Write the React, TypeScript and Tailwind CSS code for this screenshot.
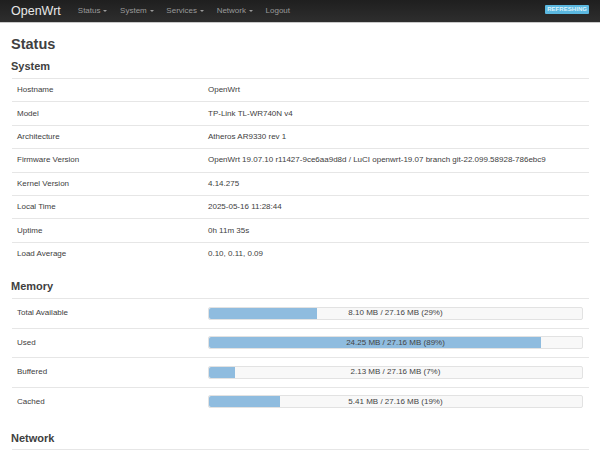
const navItems = ["Status", "System", "Services", "Network"];

const systemRows = [
  ["Hostname", "OpenWrt"],
  ["Model", "TP-Link TL-WR740N v4"],
  ["Architecture", "Atheros AR9330 rev 1"],
  ["Firmware Version", "OpenWrt 19.07.10 r11427-9ce6aa9d8d / LuCI openwrt-19.07 branch git-22.099.58928-786ebc9"],
  ["Kernel Version", "4.14.275"],
  ["Local Time", "2025-05-16 11:28:44"],
  ["Uptime", "0h 11m 35s"],
  ["Load Average", "0.10, 0.11, 0.09"],
];

const memoryRows = [
  { label: "Total Available", text: "8.10 MB / 27.16 MB (29%)", pct: 29 },
  { label: "Used", text: "24.25 MB / 27.16 MB (89%)", pct: 89 },
  { label: "Buffered", text: "2.13 MB / 27.16 MB (7%)", pct: 7 },
  { label: "Cached", text: "5.41 MB / 27.16 MB (19%)", pct: 19 },
];

// Memory usage bar
const Bar = ({ text, pct }: { text: string; pct: number }) => (
  <div className="relative h-[13px] w-[375px] rounded-[2px] border border-[#e2e2e2] bg-[#f8f8f8]">
    <div className="h-full rounded-l-[2px] bg-[#8fbcdf]" style={{ width: `${pct}%` }} />
    <div className="absolute inset-0 flex items-center justify-center text-[8px] text-[#444]">{text}</div>
  </div>
);

export default function App() {
  return (
    <div className="h-[456px] w-[600px] overflow-hidden bg-white text-[#404040] [font-family:'Liberation_Sans',Arial,sans-serif]">
      <header className="flex h-[23px] items-center justify-between border-b border-[#c9c9c9] bg-gradient-to-b from-[#1f1f1f] to-[#2e2e2e] pl-[11px] pr-[11px]">
        <div className="flex items-center">
          <span className="mr-[17px] text-[12.5px] leading-none text-[#e8e8e8]">OpenWrt</span>
          {navItems.map((item) => (
            <span key={item} className="mr-[12.6px] flex items-center gap-[3px] text-[8px] text-[#9a9a9a]">
              {item}
              <span className="h-0 w-0 border-x-[2px] border-t-[2px] border-x-transparent border-t-[#9a9a9a]" />
            </span>
          ))}
          <span className="text-[8px] text-[#9a9a9a]">Logout</span>
        </div>
        <span className="mb-[4px] rounded-[1px] bg-[#5bb8e0] px-[2px] py-[1.5px] text-[6px] font-bold leading-[6px] tracking-[0.05px] text-[#dff3fb]">REFRESHING</span>
      </header>

      <main className="pl-[11px] pr-[11px]">
        <h1 className="mt-[13px] text-[14.5px] font-bold leading-[17px] text-[#404040]">Status</h1>

        <h2 className="mt-[7px] text-[11px] font-bold leading-[13px] text-[#404040]">System</h2>
        <div className="mt-[5px] ml-px">
          {systemRows.map(([label, value]) => (
            <div key={label} className="flex h-[23.4px] items-center border-t border-[#e6e6e6] pl-[5px] text-[8px]">
              <span className="w-[191px]">{label}</span>
              <span>{value}</span>
            </div>
          ))}
        </div>

        <h2 className="mt-[15px] text-[11px] font-bold leading-[13px] text-[#404040]">Memory</h2>
        <div className="mt-[5px] ml-px">
          {memoryRows.map((row) => (
            <div key={row.label} className="flex h-[29.5px] items-center border-t border-[#e6e6e6] pl-[5px] text-[8px]">
              <span className="w-[191px]">{row.label}</span>
              <Bar text={row.text} pct={row.pct} />
            </div>
          ))}
        </div>

        <h2 className="mt-[16px] text-[11px] font-bold leading-[13px] text-[#404040]">Network</h2>
        <div className="mt-[4px] ml-px border-t border-[#e6e6e6]" />
      </main>
    </div>
  );
}
